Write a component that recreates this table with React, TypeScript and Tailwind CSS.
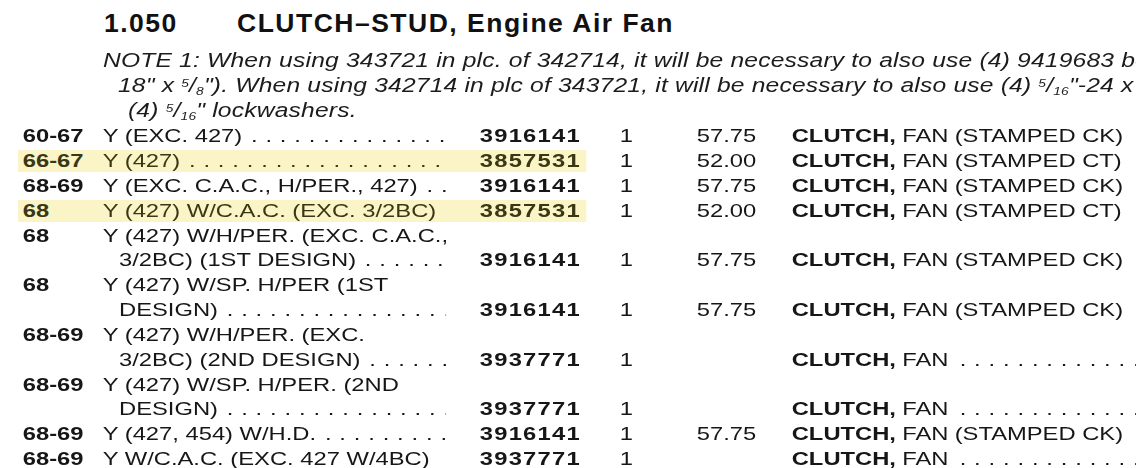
import clsx from "clsx"

// catalog page: 1.050 clutch-stud listing. The scan's type is a wide Helvetica,
// so the body is set in Liberation Sans and stretched 125% horizontally.

type Row = {
  year?: string
  desc: string
  cont?: boolean
  dots?: boolean
  part?: string
  qty?: string
  price?: string
  item?: string
  itemDots?: boolean
  hl?: boolean
}

const DOTS = ". . . . . . . . . . . . . . . . . . . . . . . . . . . . . . . . . . . ."

const ROWS: Row[] = [
  { year: "60-67", desc: "Y (EXC. 427)", dots: true, part: "3916141", qty: "1", price: "57.75", item: "(STAMPED CK)" },
  { year: "66-67", desc: "Y (427)", dots: true, part: "3857531", qty: "1", price: "52.00", item: "(STAMPED CT)", hl: true },
  { year: "68-69", desc: "Y (EXC. C.A.C., H/PER., 427)", dots: true, part: "3916141", qty: "1", price: "57.75", item: "(STAMPED CK)" },
  { year: "68", desc: "Y (427) W/C.A.C. (EXC. 3/2BC)", part: "3857531", qty: "1", price: "52.00", item: "(STAMPED CT)", hl: true },
  { year: "68", desc: "Y (427) W/H/PER. (EXC. C.A.C.," },
  { desc: "3/2BC) (1ST DESIGN)", cont: true, dots: true, part: "3916141", qty: "1", price: "57.75", item: "(STAMPED CK)" },
  { year: "68", desc: "Y (427) W/SP. H/PER (1ST" },
  { desc: "DESIGN)", cont: true, dots: true, part: "3916141", qty: "1", price: "57.75", item: "(STAMPED CK)" },
  { year: "68-69", desc: "Y (427) W/H/PER. (EXC." },
  { desc: "3/2BC) (2ND DESIGN)", cont: true, dots: true, part: "3937771", qty: "1", itemDots: true },
  { year: "68-69", desc: "Y (427) W/SP. H/PER. (2ND" },
  { desc: "DESIGN)", cont: true, dots: true, part: "3937771", qty: "1", itemDots: true },
  { year: "68-69", desc: "Y (427, 454) W/H.D.", dots: true, part: "3916141", qty: "1", price: "57.75", item: "(STAMPED CK)" },
  { year: "68-69", desc: "Y W/C.A.C. (EXC. 427 W/4BC)", part: "3937771", qty: "1", itemDots: true },
]

function Frac({ n, d }: { n: string; d: string }) {
  return (
    <span>
      <sup className="text-[11px]">{n}</sup>/<sub className="text-[11px]">{d}</sub>
    </span>
  )
}

function ListRow({ r }: { r: Row }) {
  return (
    <div className="flex h-[24.85px] items-center pl-[14.4px]">
      <div
        className={clsx(
          "flex h-[22px] w-[455px] shrink-0 items-center pl-[3.8px]",
          r.hl ? "bg-[#fbf4c6] text-[#3a3814]" : "text-[#161616]"
        )}
      >
        <span className="w-[64px] shrink-0 font-bold">{r.year}</span>
        <span className={clsx("flex w-[275px] shrink-0 overflow-hidden whitespace-nowrap", r.cont && "pl-[13px]")}>
          <span>{r.desc}</span>
          {r.dots && <span className="min-w-0 flex-1 overflow-hidden pl-[7px] tracking-[0.5px]">{DOTS}</span>}
        </span>
        <span className="ml-[26.6px] font-bold tracking-[1px]">{r.part}</span>
      </div>
      <span className="ml-[26.4px] w-[61.6px] shrink-0">{r.qty}</span>
      <span className="w-[76px] shrink-0">{r.price}</span>
      {(r.item || r.itemDots) && (
        <span className="flex min-w-0 flex-1 overflow-hidden whitespace-nowrap">
          <span className="font-bold">CLUTCH,</span>
          <span className="pl-[5px]">FAN</span>
          {r.item && <span className="pl-[5px]">{r.item}</span>}
          {r.itemDots && <span className="min-w-0 flex-1 overflow-hidden pl-[9px] tracking-[0.5px]">{DOTS}</span>}
        </span>
      )}
    </div>
  )
}

export default function App() {
  return (
    <div className="h-[468px] w-[1136px] overflow-hidden bg-white font-['Liberation_Sans',Arial,Helvetica,sans-serif] text-[#161616]">
      <div className="mt-[9px] flex h-[30px] items-center pl-[104px] text-[26.5px] font-bold tracking-[1.5px] text-[#111]">
        <span className="w-[133px]">1.050</span>
        <span>CLUTCH–STUD, Engine Air Fan</span>
      </div>

      <div className="w-[909px] origin-left scale-x-125 text-[19px]">
        <div className="mt-[9px] whitespace-nowrap text-[19.7px] italic leading-[25px] tracking-[0.15px] text-[#1c1c1c]">
          <div className="pl-[82.4px]">
            NOTE 1: When using 343721 in plc. of 342714, it will be necessary to also use (4) 9419683 bolts
          </div>
          <div className="pl-[94.4px]">
            18" x <Frac n="5" d="8" />"). When using 342714 in plc of 343721, it will be necessary to also use (4) <Frac n="5" d="16" />"-24 x 1"
          </div>
          <div className="pl-[102.4px]">
            (4) <Frac n="5" d="16" />" lockwashers.
          </div>
        </div>

        <div className="mt-[1px]">
          {ROWS.map((r, i) => (
            <ListRow key={i} r={r} />
          ))}
        </div>
      </div>
    </div>
  )
}
